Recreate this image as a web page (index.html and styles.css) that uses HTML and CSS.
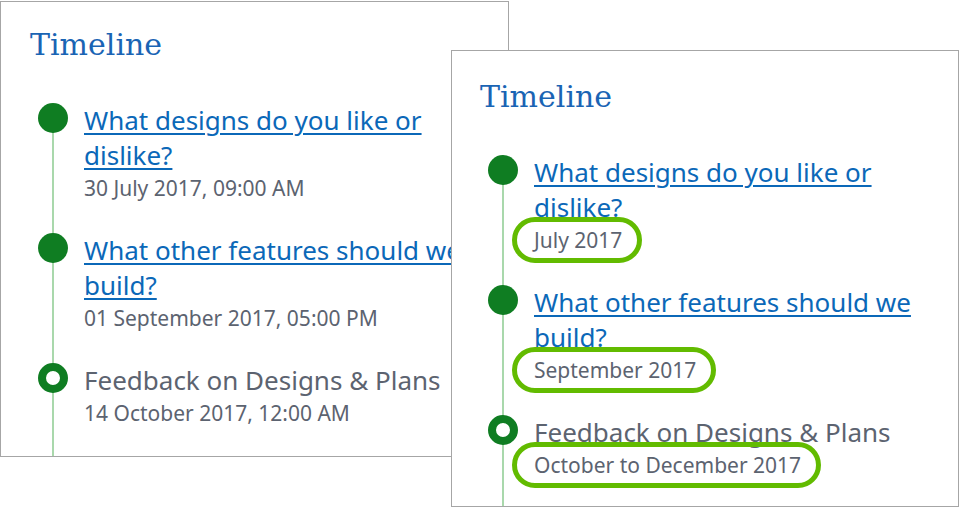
FILE: index.html
```html
<!DOCTYPE html>
<html lang="en">
<head>
    <meta charset="UTF-8">
    <meta name="viewport" content="width=device-width, initial-scale=1.0">
    <title>Timeline</title>
    <link rel="stylesheet" href="styles.css">
</head>
<body>
    <div class="desk">
        <!-- Before: exact dates and times -->
        <section class="card card-before">
            <h2 class="card-title">Timeline</h2>
            <ol class="timeline">
                <li class="event">
                    <span class="dot"></span>
                    <div class="event-body">
                        <a href="#" class="event-link">What designs do you like or dislike?</a>
                        <span class="event-date">30 July 2017, 09:00 AM</span>
                    </div>
                </li>
                <li class="event">
                    <span class="dot"></span>
                    <div class="event-body">
                        <a href="#" class="event-link">What other features should we build?</a>
                        <span class="event-date">01 September 2017, 05:00 PM</span>
                    </div>
                </li>
                <li class="event current">
                    <span class="dot"></span>
                    <div class="event-body">
                        <span class="event-title">Feedback on Designs &amp; Plans</span>
                        <span class="event-date">14 October 2017, 12:00 AM</span>
                    </div>
                </li>
            </ol>
        </section>

        <!-- After: date ranges, highlighted -->
        <section class="card card-after">
            <h2 class="card-title">Timeline</h2>
            <ol class="timeline">
                <li class="event">
                    <span class="dot"></span>
                    <div class="event-body">
                        <a href="#" class="event-link">What designs do you like or dislike?</a>
                        <span class="event-date marked">July 2017</span>
                    </div>
                </li>
                <li class="event">
                    <span class="dot"></span>
                    <div class="event-body">
                        <a href="#" class="event-link">What other features should we build?</a>
                        <span class="event-date marked">September 2017</span>
                    </div>
                </li>
                <li class="event current">
                    <span class="dot"></span>
                    <div class="event-body">
                        <span class="event-title">Feedback on Designs &amp; Plans</span>
                        <span class="event-date marked">October to December 2017</span>
                    </div>
                </li>
            </ol>
        </section>
    </div>
</body>
</html>
```

FILE: styles.css
```css
body {
    margin: 0;
    background-color: white;
    font-family: "Noto Sans", "Open Sans", sans-serif;
}

.desk {
    position: relative;
    width: 959px;
    height: 508px;
    overflow: hidden;
}

/* the two screenshots overlap like windows */
.card {
    position: absolute;
    box-sizing: border-box;
    background-color: white;
    border: 1px solid #a6a6a6;
    padding: 25px 25px 0 29px;
    overflow: hidden;
}

.card-before {
    left: 0;
    top: 1px;
    width: 509px;
    height: 456px;
}

.card-after {
    left: 451px;
    top: 50px;
    width: 508px;
    height: 457px;
    padding-top: 28px;
    padding-left: 28px;
}

.card-title {
    margin: 0;
    font-family: "DejaVu Serif", serif;
    font-size: 30px;
    font-weight: normal;
    line-height: 36px;
    color: #1a64b4;
}

.timeline {
    position: relative;
    list-style: none;
    margin: 40px 0 0;
    padding: 0 0 0 8px;
}

.timeline::before {
    content: "";
    position: absolute;
    left: 22px;
    top: 15px;
    bottom: -200px;
    width: 2px;
    background-color: #a9d8ac;
}

.event {
    position: relative;
    display: grid;
    grid-template-columns: 30px 1fr;
    column-gap: 16px;
    margin-bottom: 30px;
}

.dot {
    width: 30px;
    height: 30px;
    border-radius: 50%;
    background-color: #0f7d22;
    box-sizing: border-box;
}

.current .dot {
    background-color: white;
    border: 8px solid #0f7d22;
}

.event-body {
    display: flex;
    flex-direction: column;
    align-items: flex-start;
}

.event-link,
.event-title {
    font-size: 26px;
    line-height: 35px;
}

.event-link {
    color: #0b68b8;
    text-decoration: underline;
    text-decoration-thickness: 2px;
    text-underline-offset: 3px;
}

.event-title {
    color: #5c6370;
}

.event-date {
    position: relative;
    font-size: 21px;
    line-height: 30px;
    color: #5c6370;
}

/* green callout drawn round the changed dates */
.marked::after {
    content: "";
    position: absolute;
    top: -8px;
    bottom: -8px;
    left: -22px;
    right: -20px;
    border: 5px solid #62bb00;
    border-radius: 24px;
}
```
